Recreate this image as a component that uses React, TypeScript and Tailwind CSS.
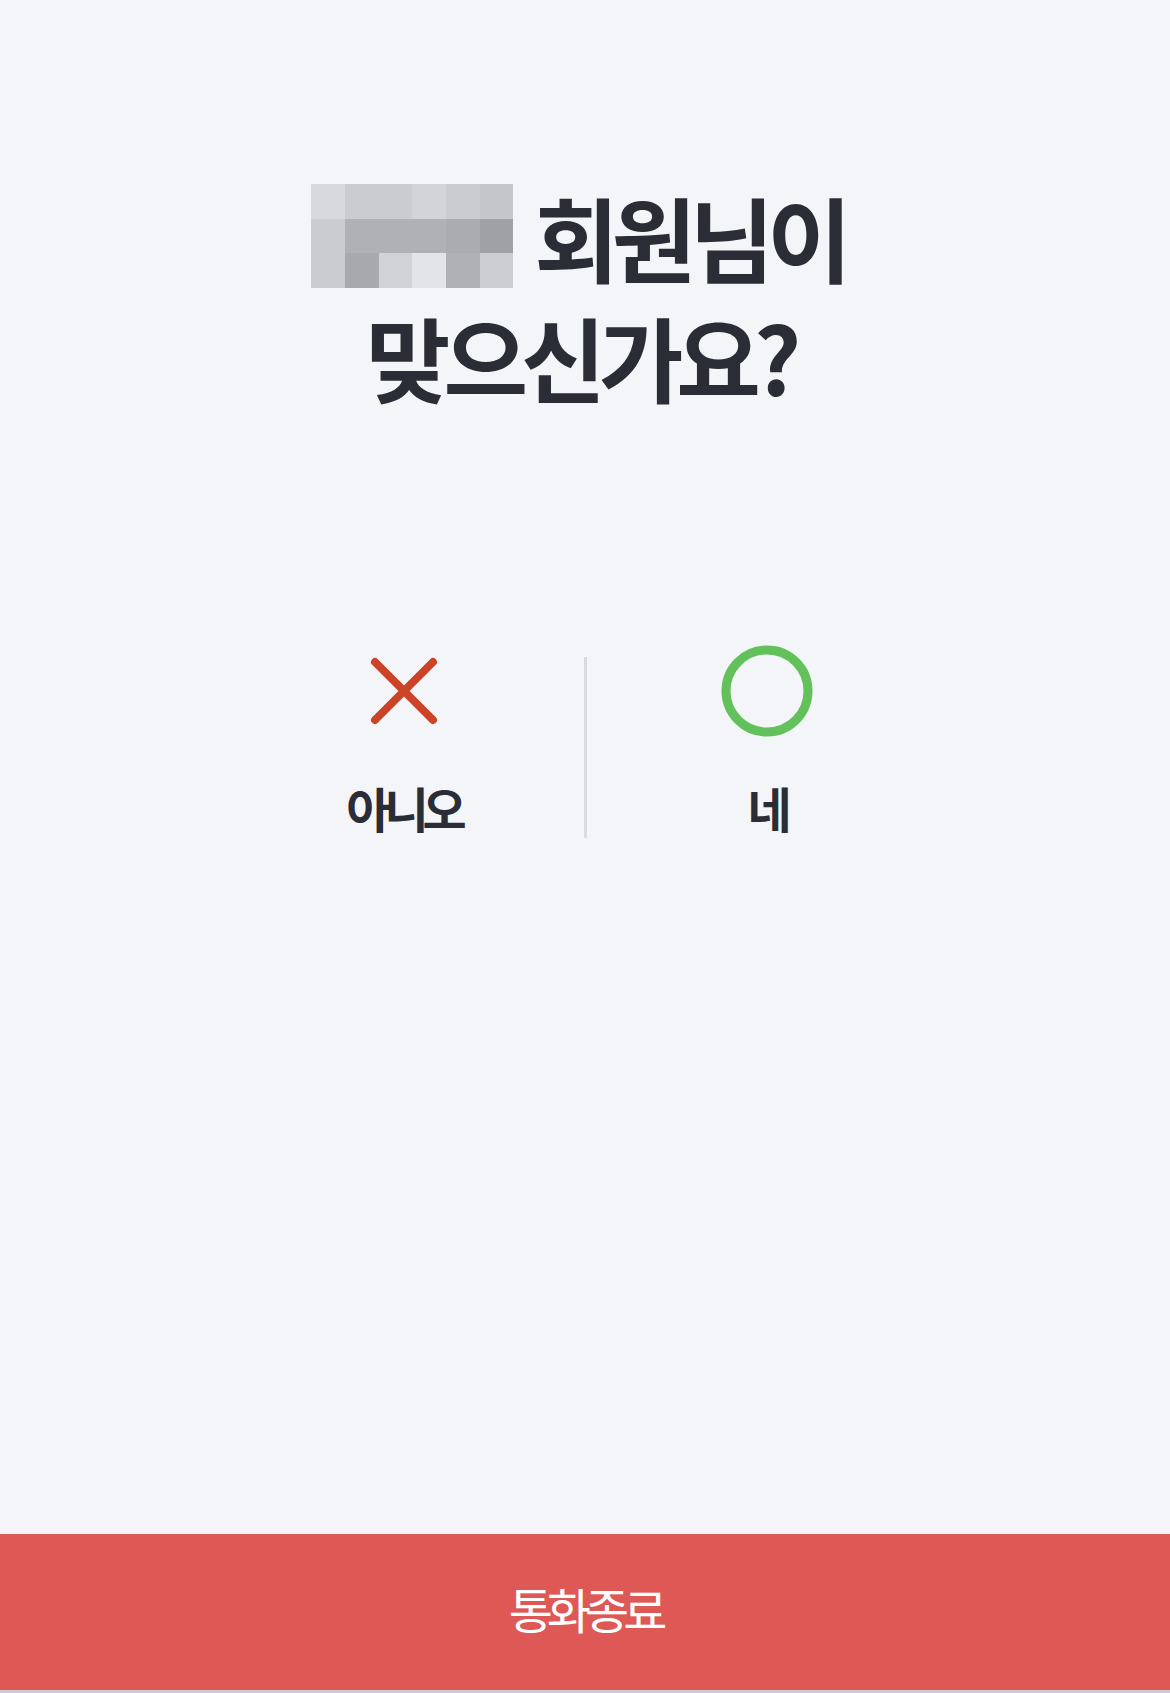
import React from 'react';

const FONT = "font-['Noto_Sans_CJK_KR','Noto_Sans',sans-serif]";

// mosaic that hides the member name
const mosaic = [
  ['#d8d9de', '#cbccd1', '#cbccd1', '#d3d4d9', '#cbccd1', '#c5c6cb'],
  ['#cbccd1', '#b0b1b6', '#b0b1b6', '#b0b1b6', '#abacb1', '#a0a1a6'],
  ['#cbccd1', '#a8a9ae', '#d1d2d6', '#e3e4e8', '#b0b1b6', '#cdced2'],
];

const NameMosaic: React.FC = () => (
  <span className="grid grid-cols-6 w-[202px] h-[104px] shrink-0">
    {mosaic.flat().map((c, i) => (
      <span key={i} style={{ backgroundColor: c }} />
    ))}
  </span>
);

const App: React.FC = () => {
  return (
    <div className={`${FONT} w-[1170px] h-[1693px] bg-[#f4f5f9] flex flex-col`}>
      <div className="pt-[176px] text-center text-[#2b2d36] font-bold text-[92px] leading-[120px] tracking-[-7px]">
        <div className="flex justify-center items-center h-[120px] gap-[21px] pr-[14px]">
          <NameMosaic />
          <span>회원님이</span>
        </div>
        <div className="pr-[10px]">맞으신가요?</div>
      </div>

      <div className="mt-[227px] flex justify-center">
        <button className="w-[360px] flex flex-col items-center">
          <svg width="96" height="96" viewBox="0 0 96 96">
            <path d="M19 19 L77 77 M77 19 L19 77" stroke="#cc4427" strokeWidth="8" strokeLinecap="round" fill="none" />
          </svg>
          <span className="mt-[38px] text-[48px] leading-[60px] font-bold text-[#2b2d36] tracking-[-6px]">아니오</span>
        </button>
        <div className="w-[3px] mt-[14px] h-[181px] bg-[#d9dbe1]" />
        <button className="w-[360px] flex flex-col items-center">
          <svg width="96" height="96" viewBox="0 0 96 96">
            <circle cx="48" cy="48" r="41" stroke="#62c15a" strokeWidth="9" fill="none" />
          </svg>
          <span className="mt-[38px] text-[48px] leading-[60px] font-bold text-[#2b2d36] tracking-[-6px]">네</span>
        </button>
      </div>

      <div className="flex-1" />

      <button className="h-[156px] w-full pb-[8px] bg-[#de5955] text-white text-[48px] tracking-[-6px]">
        통화종료
      </button>
      <div className="h-[3px] bg-[#c9cacd]" />
    </div>
  );
};

export default App;
